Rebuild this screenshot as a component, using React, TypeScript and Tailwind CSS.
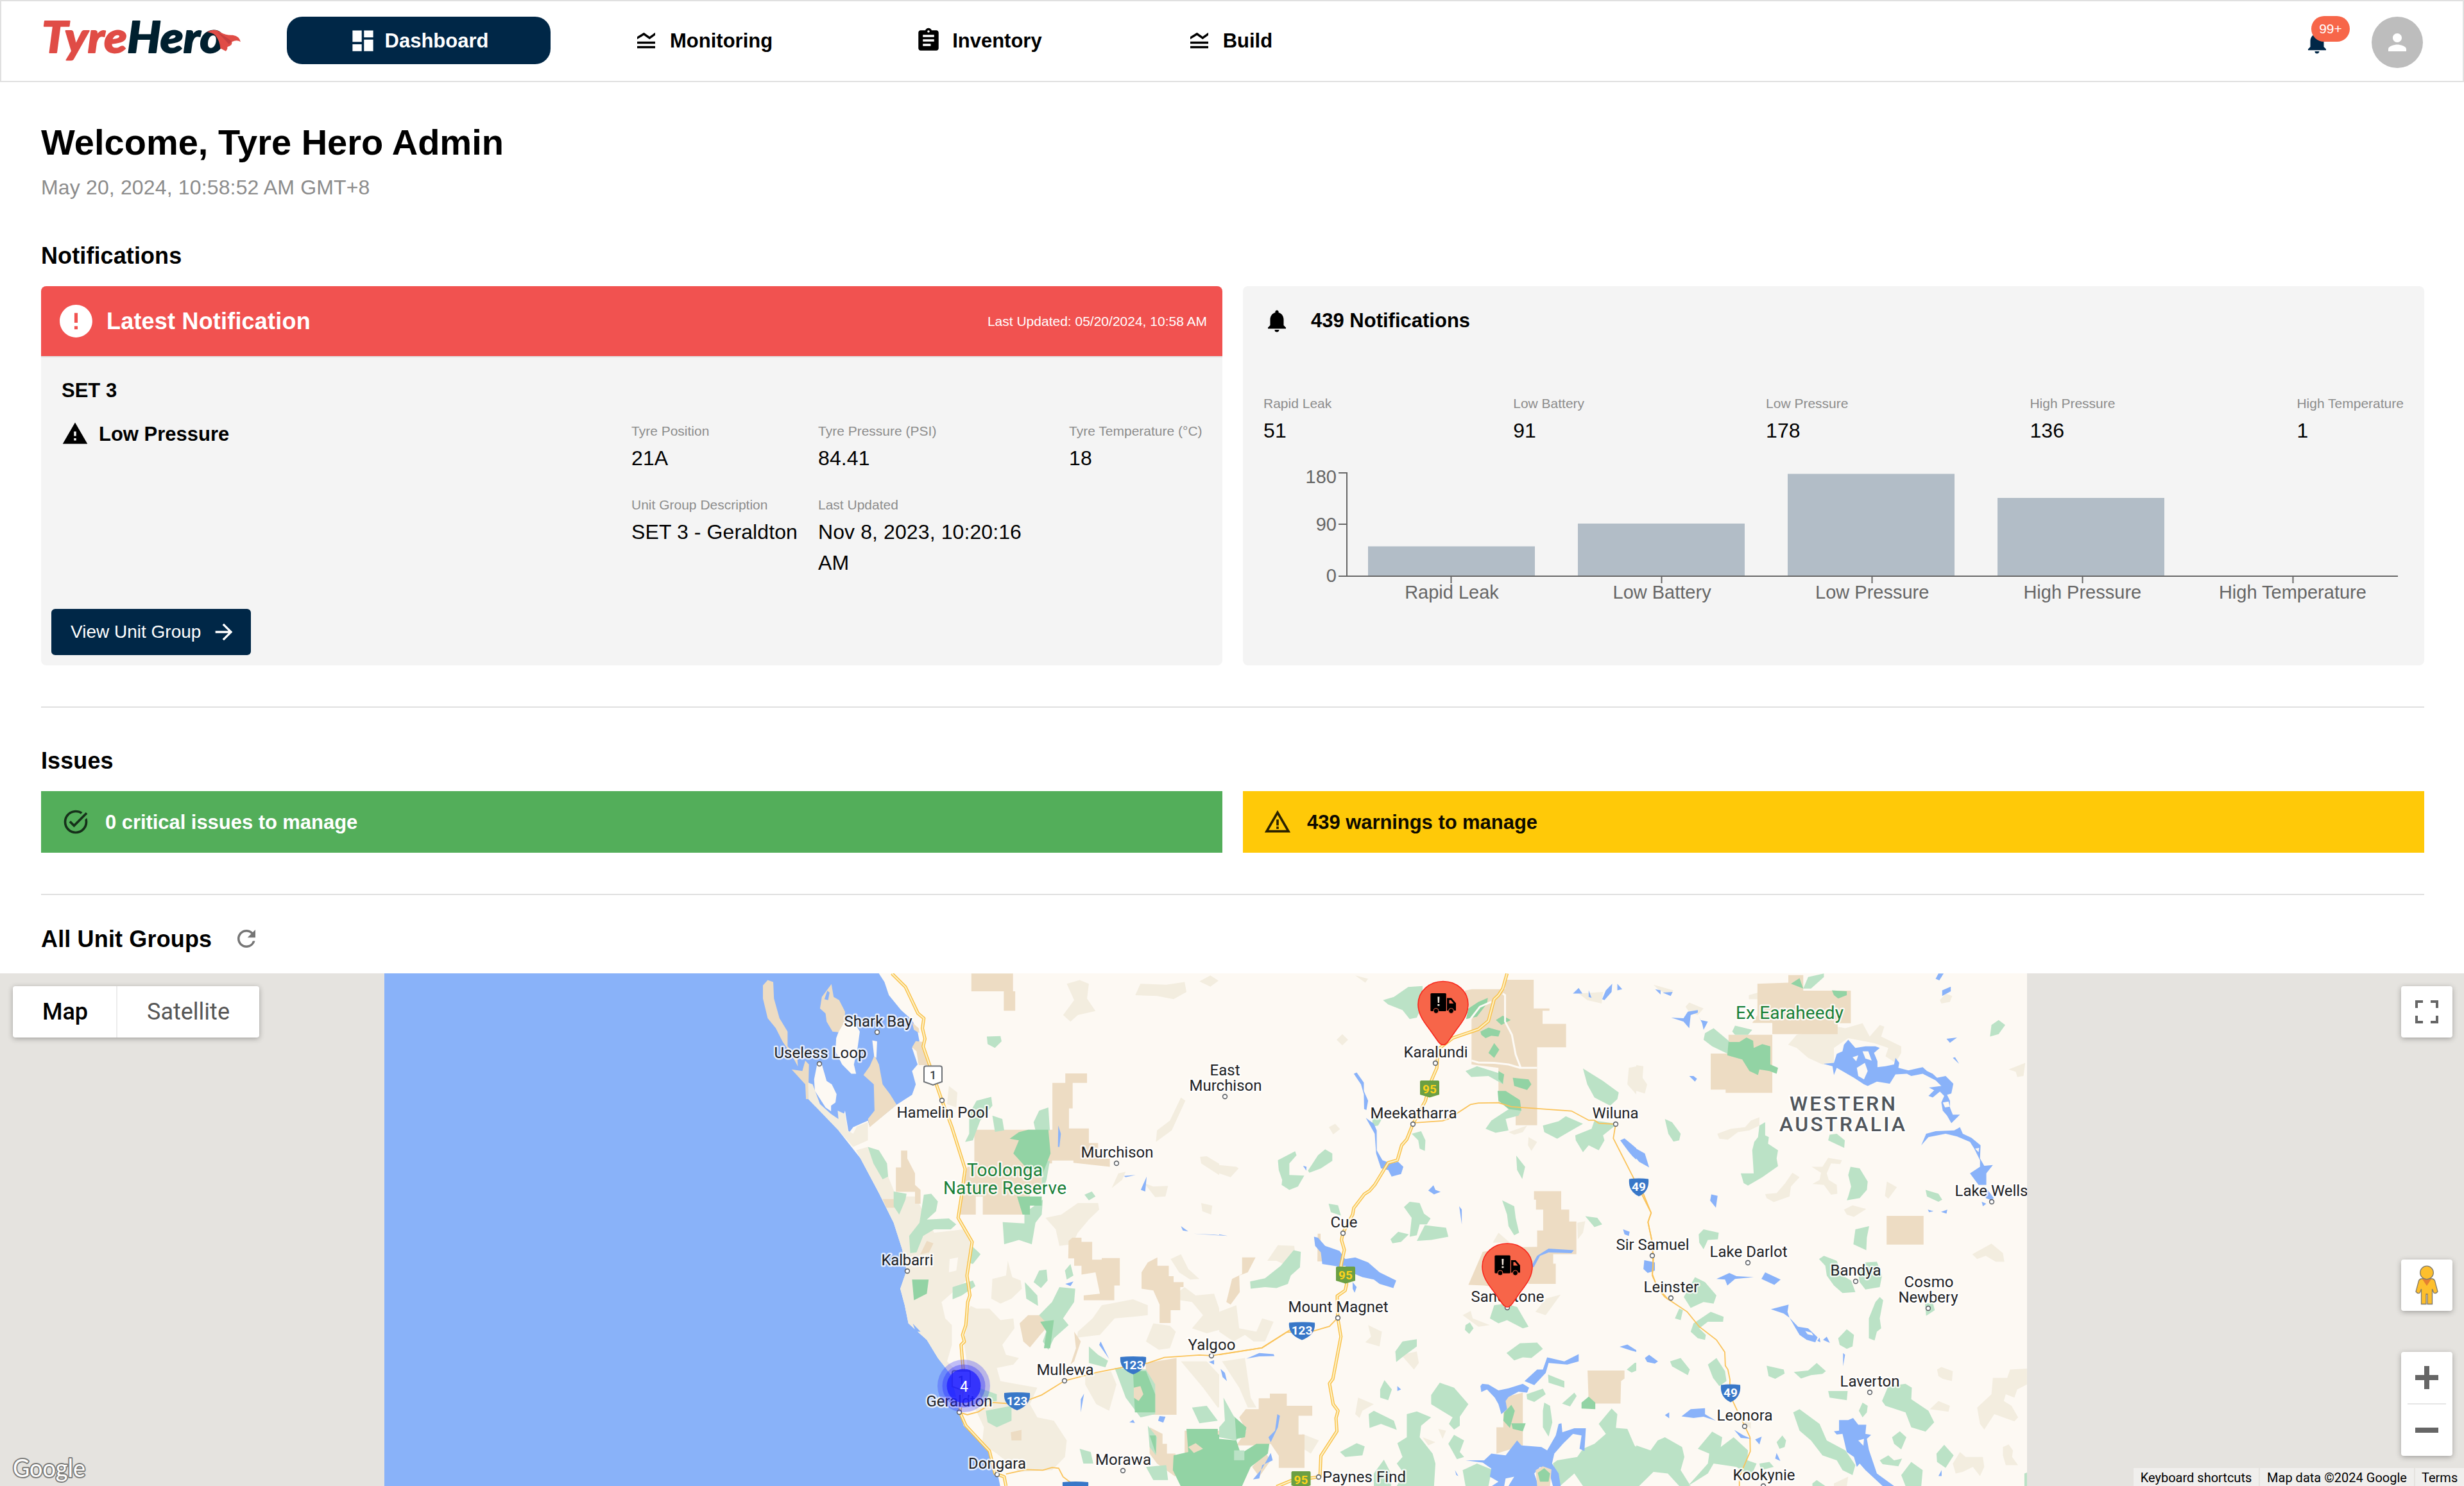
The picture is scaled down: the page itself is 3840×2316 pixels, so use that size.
import React from 'react';
import {
  MdArrowForward,
  MdAssignment,
  MdDashboard,
  MdError,
  MdLegendToggle,
  MdNotifications,
  MdPerson,
  MdRefresh,
  MdTaskAlt,
  MdWarning,
  MdWarningAmber,
} from 'react-icons/md';

function Logo() {
  return (
    <svg className="block h-[110px] w-[340px] overflow-visible" viewBox="56 10 340 110">
      <g fontFamily="Lato, sans-serif" fontWeight={900} fontStyle="italic" fontSize={67} strokeWidth={1.8} strokeLinejoin="round">
        <text x={65} y={81.5} fill="#e04c46" stroke="#e04c46" textLength={133} lengthAdjust="spacingAndGlyphs">
          Tyre
        </text>
        <text x={198} y={81.5} fill="#00202f" stroke="#00202f" textLength={152} lengthAdjust="spacingAndGlyphs">
          Hero
        </text>
      </g>
      <g transform="translate(56 20) scale(.3333)">
        <path
          d="M800 90Q835 70 865 92Q890 106 920 104Q952 108 957 136Q940 124 916 136Q922 150 895 160Q897 170 888 179L862 166Q860 130 838 104Q822 92 800 90Z"
          fill="#e04c46"
        />
        <path d="M845 88Q890 112 915 134L902 146Q878 120 845 88Z" fill="#c63f40" />
      </g>
    </svg>
  );
}

function Header() {
  return (
    <header className="flex h-[128px] items-start border-2 border-[#e0e0e0] bg-white text-[31px] font-bold text-black">
      <div className="ml-[54px] mt-[8px]">
        <Logo />
      </div>
      <nav className="ml-[51px] mt-[24px] flex h-[74px] items-center">
        <a className="flex h-[74px] w-[411px] items-center justify-center gap-[13px] rounded-[24px] bg-[#002747] text-white">
          <MdDashboard size={43} />
          <span className="pt-[2px]">Dashboard</span>
        </a>
        <a className="ml-[128px] flex items-center gap-[16px]">
          <MdLegendToggle size={42} />
          <span className="pt-[2px]">Monitoring</span>
        </a>
        <a className="ml-[222px] flex items-center gap-[16px]">
          <MdAssignment size={42} />
          <span className="pt-[2px]">Inventory</span>
        </a>
        <a className="ml-[224px] flex items-center gap-[16px]">
          <MdLegendToggle size={42} />
          <span className="pt-[2px]">Build</span>
        </a>
      </nav>
      <div className="ml-auto flex">
        <div className="relative mt-[43px] h-[42px] w-[42px] text-[#002747]">
          <MdNotifications size={42} />
          <span className="absolute left-[12px] top-[-20px] flex h-[40px] w-[60px] items-center justify-center rounded-full bg-[#f76649] text-[21px] font-normal text-white">
            99+
          </span>
        </div>
        <div className="ml-[64px] mr-[62px] mt-[24px] flex h-[80px] w-[80px] items-center justify-center rounded-full bg-[#bdbdbd] text-white">
          <MdPerson size={42} />
        </div>
      </div>
    </header>
  );
}

function Field({ label, value }: { label: string; value: string }) {
  return (
    <div>
      <div className="whitespace-nowrap text-[21px] leading-[32px] text-[#8c8c8c]">{label}</div>
      <div className="mt-[2px] max-w-[330px] text-[32px] leading-[48px] tracking-[0.1px] text-black">{value}</div>
    </div>
  );
}

function LatestNotification() {
  return (
    <section className="flex h-[591px] w-[1841px] flex-col overflow-hidden rounded-[8px] bg-[#f4f4f4]">
      <div className="flex h-[111px] items-center justify-between border-b-2 border-[#e0e0e0] bg-[#f15250] pl-[24px] pr-[24px] text-white">
        <div className="flex items-center gap-[17px] text-[36px] font-bold tracking-[0.2px]">
          <MdError size={61} />
          Latest Notification
        </div>
        <div className="text-[21px]">Last Updated: 05/20/2024, 10:58 AM</div>
      </div>
      <div className="flex flex-1">
        <div className="flex w-[920px] flex-col text-[31px] font-bold">
          <div className="ml-[32px] mt-[28px] leading-[48px]">SET 3</div>
          <div className="ml-[32px] mt-[19px] flex h-[48px] items-center gap-[16px]">
            <MdWarning size={42} />
            <span className="pt-[2px]">Low Pressure</span>
          </div>
          <button className="mb-[16px] ml-[16px] mt-auto flex h-[72px] w-[311px] items-center gap-[16px] rounded-[6px] bg-[#002747] pl-[30px] text-[28px] font-normal text-white">
            View Unit Group
            <MdArrowForward size={40} />
          </button>
        </div>
        <div className="grid flex-1 grid-cols-[291px_391px_1fr] content-start gap-y-[33px] pt-[99px]">
          <Field label="Tyre Position" value="21A" />
          <Field label="Tyre Pressure (PSI)" value="84.41" />
          <Field label="Tyre Temperature (°C)" value="18" />
          <Field label="Unit Group Description" value="SET 3 - Geraldton" />
          <Field label="Last Updated" value="Nov 8, 2023, 10:20:16 AM" />
        </div>
      </div>
    </section>
  );
}

const CATEGORIES = [
  { name: 'Rapid Leak', count: 51, x: 2132, top: 851.5 },
  { name: 'Low Battery', count: 91, x: 2459, top: 816 },
  { name: 'Low Pressure', count: 178, x: 2786, top: 738.5 },
  { name: 'High Pressure', count: 136, x: 3113, top: 776 },
  { name: 'High Temperature', count: 1, x: 3440, top: 897 },
];

function Chart() {
  return (
    <svg className="mt-[25px] block h-[240px] w-[1777px]" viewBox="1969 720 1777 240">
      {CATEGORIES.map((c) => (
        <rect key={c.name} x={c.x} y={c.top} width={260} height={897 - c.top} fill="#b2bdc7" />
      ))}
      <path
        d="M2086 737H2099V898M2086 817H2099M2086 898H3737"
        fill="none"
        stroke="#666"
        strokeWidth={2}
      />
      <g fill="#666" fontSize={29} textAnchor="middle">
        {CATEGORIES.map((c, i) => (
          <g key={c.name}>
            <rect x={2261.5 + i * 328 - 1} y={898} width={2} height={11} />
            <text x={2262.5 + i * 327.6} y={933}>
              {c.name}
            </text>
          </g>
        ))}
      </g>
      <g fill="#666" fontSize={29} textAnchor="end">
        <text x={2083} y={753}>180</text>
        <text x={2083} y={827}>90</text>
        <text x={2083} y={907}>0</text>
      </g>
    </svg>
  );
}

function NotificationSummary() {
  return (
    <section className="h-[591px] w-[1841px] rounded-[8px] bg-[#f4f4f4] px-[32px]">
      <div className="flex h-[108px] items-center gap-[32px] text-[31px] font-bold">
        <MdNotifications size={42} />
        439 Notifications
      </div>
      <div className="mt-[59px] flex justify-between">
        {CATEGORIES.map((c) => (
          <Field key={c.name} label={c.name} value={String(c.count)} />
        ))}
      </div>
      <Chart />
    </section>
  );
}

const WATER = '#89b2f9';
const LAND = '#fdf9f3';
const TAN = '#eddcc3';
const SAND = '#f3eddf';
const GREEN = '#bbe2c6';
const DEEP = '#92d3a4';

type Layer = [string, string];

const WEST: Layer[] = [
  [WATER, 'M-900 0H462L470 14L485 40L497 80L530 125L560 155L575 190L580 220L560 240L575 290L560 310L570 350L560 382L535 400L518 412L445 478L440 460L400 480L388 498L378 430L372 450L380 490L360 490L420 575L470 680L510 770L533 850L545 915L528 970L540 1020L550 1075L600 1125L630 1180L665 1230L690 1345L700 1385L770 1465L795 1545L805 1600H-900Z'],
  [TAN, 'M168 34L183 40L185 90L200 150L222 190L222 235L248 265L250 296L235 265L208 220L190 180L168 150L155 90L155 50Z'],
  [TAN, 'M341 46L347 85L362 95L378 130L377 175L360 192L344 190L328 160L325 135L310 120L315 85Z'],
  [WATER, 'M330 66L336 72L332 95L322 92Z'],
  [LAND, 'M360 192L377 160L405 165L418 190L412 240L402 290L408 318L395 318L370 290L352 250L354 210Z'],
  [TAN, 'M458 262L470 290L480 350L500 380L518 412L445 480L440 455L458 430L456 350L428 322L445 295Z'],
  [LAND, 'M452 217L465 220L463 270L457 265Z'],
  [TAN, 'M270 278L280 290L278 395L272 395L270 350L233 305L262 310Z'],
  [LAND, 'M302 290L315 290L328 340L342 350L355 380L352 405L340 415L340 432L325 420L296 370L294 335Z'],
  [SAND, 'M278 345L290 350L310 410L340 440L360 455L358 430L378 440L385 490L400 500L410 478L440 465L440 520L400 540L360 490L278 395Z'],
  [TAN, 'M560 163L578 180L580 195L565 185ZM570 219L590 222L605 292L578 292L572 250L560 238Z'],
  [SAND, 'M408 550L440 540L495 630L517 690L570 690L600 760L620 800L700 790L720 830L712 940L640 1010L650 1060L668 1080L668 1140L655 1190L690 1230L690 1340L665 1230L630 1180L600 1125L550 1075L540 1020L528 970L545 915L533 850L510 770L470 680Z'],
  [SAND, 'M715 1020L735 1030L770 1030L800 1065L835 1060L838 1090L805 1140L815 1170L850 1180L835 1200L790 1210L800 1250L850 1260L900 1270L880 1320L900 1360L945 1370L980 1430L975 1480L940 1520L850 1525L790 1470L750 1440L755 1390L730 1330L710 1200L700 1130L710 1080Z'],
  [SAND, 'M820 885L832 935L855 945L858 970L830 1000L800 1015L775 1000L778 940L815 930ZM922 755L965 745L1010 710L1065 710L1068 730L1040 760L1010 800L995 835L960 840L950 790ZM980 45L1015 34L1040 45L1035 90L1058 128L1010 140L990 160L970 140L1000 95ZM1166 80L1180 45L1250 48L1300 40L1305 70L1270 92L1225 82ZM1340 38L1370 20L1392 36L1370 54ZM1290 390L1302 400L1265 490L1222 525L1225 490L1260 460ZM1342 570L1360 568L1400 595L1448 600L1430 630L1400 630L1345 590ZM1190 650L1215 660L1255 658L1248 690L1220 692ZM1120 620L1140 615L1130 640L1102 665ZM1345 710L1375 718L1372 745L1348 735ZM1262 880L1290 865L1310 910L1340 940L1315 942L1285 920ZM660 355L683 375L680 420L655 410Z'],
  [SAND, 'M1010 1100L1050 1060L1075 1020L1160 1002L1200 1020L1200 1050L1160 1055L1110 1060L1070 1110L1008 1118ZM1215 1075L1260 1082L1276 1100L1260 1150L1230 1155L1195 1130ZM1260 1000L1300 965L1330 990L1380 985L1400 1050L1450 1060L1490 1090L1500 1040L1530 1050L1525 1090L1480 1130L1440 1130L1410 1090L1360 1105L1320 1090L1350 1050L1320 1010ZM1290 1190L1360 1190L1410 1250L1430 1320L1390 1330L1350 1270ZM1030 1230L1100 1220L1115 1260L1095 1340L1060 1320L1030 1260Z'],
  [TAN, 'M721 14H834V68H840V127H809V68H721ZM976 317H1035V346H996V423H986V484H1040V528H1065V576H1097V600L998 588V581H934V488H941V346H976ZM729 488H940V590H912V680H880V745H752V690H733V745H690L694 690L710 600H729ZM530 551H547V575L568 620L568 655L583 670V712H568V676H516V602H530ZM480 698H516V724H490ZM600 825L618 832L606 860L582 866Z'],
  [TAN, 'M985 825L995 815H1020V828H1049V882H1075V877H1124V960H1109V1005H1026V990L1070 985L1058 920L1020 927V900H1000V878H984ZM1183 920L1200 890L1226 875V900H1257V932H1270V950H1297V965H1288V1035H1262V1074H1232V1018L1215 975L1183 970ZM1456 875H1493L1478 910L1450 935L1445 990L1425 1015H1413L1420 970L1445 930ZM875 1050H925L940 1070L908 1110L880 1148L862 1130L852 1075ZM1000 1100L1018 1130L1000 1190L990 1200L1005 1150ZM1195 1195L1278 1180V1352H1190ZM828 1405L857 1398V1430L830 1430ZM1205 1390L1240 1410V1440H1252V1470H1275V1540L1225 1500L1205 1470ZM1440 1350H1475L1505 1328V1300H1531V1288H1600V1510H1568L1520 1440L1440 1450Z'],
  [TAN, 'M1300 1400H1400V1490H1300Z'],
  [GREEN, 'M763 205L800 204L803 220L785 240L765 228ZM735 400L775 388L778 415L745 460L725 520L704 525L715 500L715 440ZM778 445L805 455L810 490L785 494ZM890 465L905 430L930 420L934 490L895 490ZM440 540L470 550L492 590L495 630L480 638L455 590ZM510 675L545 682L542 700L525 745L510 720ZM592 685L612 682L630 705L625 735L600 760L660 757L680 775L665 790L620 790L590 810L572 860L555 862L552 810L580 770ZM720 838L746 865L725 895L710 890ZM806 768L865 772L865 740L915 700L912 745L895 770L885 835L850 822L810 835ZM912 582H934L925 640L912 680ZM1028 685L1048 675L1058 690L1040 702ZM905 915L925 912L928 945L910 968L890 950ZM990 895L998 930L980 942L975 915ZM866 950L900 990L902 1022L870 1000ZM670 965L725 945L732 962L695 990L670 1002ZM960 965L1003 970L1000 1010L970 1060L985 1080L945 1120L930 1155L915 1130L930 1080L905 1050L940 1010ZM1040 1145L1065 1170L1092 1188L1085 1208L1040 1195ZM1110 1210L1195 1215L1220 1260V1350L1180 1360L1140 1300ZM760 1340L830 1325L830 1370L790 1390L765 1375ZM1015 1455L1045 1465L1052 1500L1025 1500ZM1200 1385L1225 1420L1222 1475L1205 1450ZM1195 1510L1250 1505L1255 1550L1215 1550ZM740 1270L790 1290L790 1310L750 1315ZM1320 1330L1360 1325L1390 1370L1340 1378ZM1410 1300L1440 1340L1465 1390L1440 1420L1405 1400ZM1480 945L1530 945L1568 925V955L1510 972L1480 968ZM1555 580L1568 576V630L1555 615Z'],
  [DEEP, 'M825 515L850 495L875 488H930L936 560L915 620L880 615L835 560L850 520ZM845 690H912V718H880V745H860ZM560 942L605 942L600 985L565 1005ZM908 1070L945 1065L935 1150H918L925 1100ZM1160 1220H1195L1220 1290V1345H1165ZM1305 1395H1390V1412H1420V1390H1422V1360L1445 1360L1468 1400L1470 1425L1440 1450L1460 1460L1530 1445V1475L1495 1490L1495 1510H1455V1570H1290L1268 1520L1270 1475L1310 1465ZM1205 1415H1222V1470Z'],
  [GREEN, 'M1435 1460H1462V1492H1435ZM1395 1520H1423V1535H1395ZM1500 1510L1530 1520L1500 1560H1450V1515Z'],
  [TAN, 'M1162 1270L1180 1265L1188 1290L1175 1310L1162 1300ZM1310 1450L1330 1438L1350 1455L1325 1468Z'],
  [LAND, 'M662 880L685 875L680 915L660 920ZM640 1010L690 1005L720 1020L700 1060L670 1050Z'],
  [WATER, 'M562 1076L583 1100L570 1100ZM957 475L964 500L960 540L956 540ZM1135 628L1167 625L1140 632ZM1197 630L1193 675L1181 670ZM1290 780L1310 796L1295 793ZM1323 803L1420 810L1380 806ZM976 955L998 948L990 962ZM1072 1130L1095 1183L1068 1140ZM1027 1288L1018 1345V1305ZM1468 1185L1500 1165L1545 1170L1500 1180ZM1398 1212L1414 1250L1402 1240ZM1232 1356L1248 1358L1242 1376L1228 1370ZM1150 1375L1160 1367L1165 1377ZM1530 1470L1538 1490L1497 1548L1510 1510ZM1553 1350L1558 1400L1540 1440L1532 1420ZM1366 1192L1380 1186V1200Z'],
];

const CENTRE: Layer[] = [
  [SAND, 'M0 595L60 600L68 605L40 632L0 620ZM410 215L430 198L450 215L430 232ZM383 480L405 470L422 486L398 502ZM1430 300L1480 292L1478 330L1495 345L1455 380L1425 350ZM1080 510L1110 525L1090 552L1078 535ZM1010 495L1075 475L1060 495L1030 503ZM168 885L205 838L262 840L265 860L225 895L200 885ZM520 1080L568 1100L560 1145L510 1132L530 1115ZM850 1050L878 1037L885 1060L945 1080L905 1085ZM1104 1040L1140 1000L1192 988L1140 1050ZM1250 770L1278 765L1270 800L1252 820ZM635 1170L690 1160L697 1195L680 1215ZM485 1300L540 1320L500 1340L490 1362L475 1350ZM710 1420L755 1435L730 1445ZM765 1395L792 1400L780 1425ZM475 20L520 30L510 42ZM290 1410L348 1430L320 1470L285 1450ZM955 830L975 800L1015 830ZM0 1040L60 1020L70 1090L130 1100L150 1060L190 1070L160 1130L120 1130L90 1110L50 1130L0 1100ZM10 1190L90 1180L110 1300L130 1330L100 1330L70 1270ZM1517 50L1570 65V90L1530 70ZM1255 75L1340 70L1335 105L1285 95Z'],
  [TAN, 'M858 66L882 62H998V33H1098V120H1153V127H1129V167H1211V238H1110V474H1035V405H975V300L881 290V130L860 100ZM1099 674H1194V730H1222V766H1247V865H1166V894H1175V955H1085L1040 950L1000 970L925 960L870 958L920 858L1000 845L1110 843V793H1131V730H1106V700H1099ZM344 803H354V830L360 887H343ZM80 875H127L100 920L70 930L72 980L40 1018L25 1010L45 940L80 925ZM1286 1218H1415V1242L1403 1250L1401 1318H1290ZM1000 1298L1060 1285V1445L968 1470V1390H992V1340ZM138 1302H177V1288H236V1325H325V1355H277V1412H298V1513H208V1476L180 1440L150 1445H60L95 1400L70 1360L93 1335H138ZM115 1510L160 1465L180 1490L140 1540Z'],
  [GREEN, 'M572 95L610 85L660 55L710 52V110L690 148L665 152L640 125L590 108ZM860 310L900 295L990 320L992 350L940 325L880 328ZM1270 302L1340 340L1395 375L1390 395L1365 415L1310 390L1285 350ZM1130 475L1185 462L1210 447L1270 470L1225 492L1180 515L1135 495ZM1243 505L1300 485L1310 460L1390 470L1340 505L1345 520L1325 550L1290 535L1270 556L1245 520ZM930 485L950 460L1020 420L1055 430L1045 445L1000 455L1010 490L965 497ZM672 500L705 492L720 520L718 552L700 545L695 520ZM205 580L265 553L270 565L245 590L245 625L297 627L275 660L245 670L218 655L220 640L208 610ZM310 612L345 565L370 547L395 560L395 582L355 605L315 618ZM1037 566L1068 600L1058 637L1040 610ZM382 712L415 717L425 748L390 738ZM645 722L665 706L700 710L715 742L738 757L725 775L700 775L690 808L665 812L672 755ZM598 820L625 797L662 805L635 828L605 832ZM690 825L718 777L792 785L800 812L765 818L740 822ZM988 702L1030 720L1035 755L1047 800L1030 808L1010 780L1005 745ZM1278 750L1320 755L1337 775L1310 783ZM108 948L160 938L215 900L260 853L285 858L282 905L250 930L240 955L200 968L160 965L110 970ZM535 450L570 452L555 475L535 478ZM945 1060L960 1020L1000 1015L1040 1025L1080 1085L1060 1090L1005 1065L975 1075ZM860 1080L875 1072L888 1090L873 1107L858 1095ZM615 1160L640 1130L690 1123L690 1145L650 1170L618 1192ZM1003 1165L1050 1135L1110 1133L1130 1152L1090 1180L1060 1178L1030 1187ZM1423 1215L1450 1195L1488 1190L1480 1210L1440 1224ZM1148 1230L1205 1250L1205 1270L1150 1255ZM1073 1290L1130 1273L1140 1290L1100 1313L1075 1305ZM1197 1318L1240 1285L1248 1295L1225 1327ZM1135 1315L1155 1325L1163 1375L1150 1418L1130 1390L1130 1340ZM740 1292L770 1255L820 1270L840 1290L870 1320L840 1358L840 1385L820 1397L802 1380L815 1360L740 1320ZM522 1350L540 1340L610 1370L620 1398L565 1380L525 1392ZM562 1275L577 1247L603 1275L590 1308L562 1300ZM422 1465L480 1438L508 1448L500 1475L440 1480ZM620 1500L640 1480L622 1438L655 1420L655 1350L690 1342L740 1360L705 1385L700 1420L745 1470L755 1500L750 1568H620L645 1530ZM540 1530L575 1488L600 1530L600 1568H540ZM800 1440L820 1413L855 1430L840 1465L855 1480L830 1487ZM850 1520L900 1500L952 1518L940 1568H860ZM15 1300L50 1355L90 1390L60 1430L0 1420V1390L20 1370Z'],
  [GREEN, 'M1325 1380L1370 1333L1390 1350L1385 1392L1425 1395L1450 1445L1500 1480L1545 1420H1568V1520L1520 1510L1490 1568H1270L1240 1530L1190 1568L1165 1500L1180 1490L1250 1480L1270 1455L1310 1440L1350 1410Z'],
  [DEEP, 'M870 120L905 100L938 88L935 105L900 145L862 152ZM966 155L990 142L1018 155L985 170ZM912 190L940 178L982 188L975 205L950 203L930 210L915 200ZM960 225L978 245L960 270L940 255ZM1025 330L1080 335L1090 350L1075 367L1030 355ZM972 370L1000 370L1050 398L1055 430L1010 425L975 400ZM975 310L995 320L990 348L975 335ZM1265 1315L1290 1297L1313 1315V1335L1265 1333ZM995 1345L1020 1322L1032 1340L1015 1392L992 1370ZM1020 1378L1070 1378L1060 1402L1025 1395ZM0 1425L60 1430L75 1470L130 1440L175 1440L170 1470L110 1510L80 1568H0ZM55 1360L95 1390L90 1420L60 1425Z'],
  [GREEN, 'M52 1460H88V1490H52Z'],
  [WATER, 'M470 318L480 314L505 345L505 370L520 400L514 428L506 425L505 380L495 350ZM512 452L540 470L550 490L550 550L570 580L600 590L625 585L643 600L635 622L602 630L590 610L565 605L548 560L543 500ZM331 812L345 815L370 840L420 855L440 880L475 875L520 890L560 920L618 945L608 968L560 955L540 942L500 935L460 920L440 900L420 903L360 895L355 860L335 840ZM466 950L480 965L473 982L466 970ZM730 672L748 656L755 670L773 676L750 684ZM838 720L847 730V775ZM293 597L305 600L304 612ZM1400 520L1415 514L1465 550L1465 545L1490 570L1501 603L1465 585L1445 570L1430 555ZM1410 790L1433 797L1430 810L1415 805ZM1482 885L1520 885L1520 915L1500 920L1485 915ZM1090 900L1110 870L1150 848L1238 853L1230 862L1150 860L1120 870L1098 905ZM1235 75L1255 58L1268 75ZM1290 65L1300 88L1290 85ZM1337 92L1350 65L1372 45L1370 70L1345 95ZM1390 45L1407 62L1390 65ZM1522 65L1568 75V80L1540 82ZM95 1182L140 1165L190 1168L193 1174L140 1175ZM5 1213L20 1225L27 1250L12 1238ZM1398 1146L1425 1139L1472 1165L1430 1155ZM1487 1180L1500 1170L1532 1190L1525 1197L1495 1190ZM912 1265L918 1258L940 1260L975 1278L1010 1272L1060 1258L1082 1270L1075 1285L1045 1282L1010 1298L1000 1310L1005 1335L985 1350L975 1320L962 1300L935 1275L915 1283ZM1066 1250L1110 1215L1130 1215L1145 1178L1205 1190L1255 1168L1255 1190L1215 1200L1150 1195L1140 1225L1100 1262ZM860 1490L925 1490L950 1470L1000 1475L1040 1430L1055 1445L1125 1450L1145 1460L1175 1415L1185 1380L1195 1378L1198 1405L1240 1393H1280L1275 1462L1258 1455L1265 1415L1235 1410L1200 1440L1170 1470L1162 1500L1185 1530L1192 1568H1165L1150 1520L1120 1510L1100 1530L1115 1568H1010L1030 1540L1000 1545L995 1568H952L975 1555L945 1540L950 1515L920 1497ZM622 1265L635 1275L622 1280ZM203 1350L212 1355L205 1390L180 1435L172 1420L195 1400ZM180 1468L187 1490L150 1505L140 1545L118 1548L150 1515ZM823 1520L835 1538L828 1535ZM0 805L30 810L0 808Z'],
  [TAN, 'M1105 1520L1130 1508L1160 1518L1155 1568H1110Z'],
  [DEEP, 'M1112 1528L1135 1514L1155 1530L1150 1555L1120 1555Z'],
];

const EAST: Layer[] = [
  [SAND, 'M60 48L130 65L120 80L80 65ZM172 115L185 102L235 120L215 140L185 132ZM393 80L425 72V92H393ZM1060 95L1080 75L1103 82L1095 100L1065 105ZM1300 305L1358 285L1352 325L1330 328L1325 312ZM530 230L560 200L700 175L730 180L790 165L815 205L850 170L866 175L855 205L925 235L925 255L905 285L870 265L880 240L830 225L740 210L690 240L690 285L650 290L600 270L560 240ZM283 500L330 485L380 480L400 460L430 450L430 475L395 490L355 495L320 518L290 515ZM450 683L490 680L520 650L545 618L570 632L540 660L535 690L480 707L455 695ZM612 600L650 600L670 573L718 580L712 592L680 590L665 620L672 640L700 655L702 682L680 685L655 655L615 652L640 640L645 618ZM725 730L755 717L803 728L760 752L735 745ZM875 645L910 662L880 697L868 688ZM1173 865L1240 833L1280 862L1285 888L1255 888L1220 870L1190 880ZM1050 1215L1065 1207L1105 1220L1102 1250L1070 1243L1055 1235ZM1025 1335L1055 1310L1095 1325L1090 1343ZM1190 1330L1240 1290L1245 1240L1295 1240L1305 1215L1364 1212V1260L1330 1275L1320 1300L1290 1290L1283 1310L1310 1325L1333 1360L1320 1372L1250 1350L1215 1397L1200 1380ZM1105 1500L1130 1465L1150 1480L1210 1480L1215 1510L1200 1538L1175 1510L1140 1525L1115 1530ZM1280 1450L1300 1442L1315 1460L1312 1480L1333 1505L1290 1505L1280 1475ZM0 292L25 295L22 330L38 350L30 378L0 370ZM375 1375L400 1375L400 1395ZM690 1560L740 1540L735 1568H690Z'],
  [TAN, 'M423 45L531 42V19H583V66H749V165H703V198H475V376H312V366H260V257H322V200H475V164H405L423 140ZM874 749H1003V836H874Z'],
  [GREEN, 'M583 60L600 25L655 14L655 25L610 60ZM235 215L240 195L270 180L325 220L320 258L265 235ZM335 190L345 172L405 185L390 200L345 200ZM1235 205L1240 170L1265 155L1288 170L1265 198ZM100 455L125 465L155 500L150 520L130 524L112 500ZM430 475L450 465L450 505L463 510L460 530L495 550L490 575L495 598L440 632L390 657L375 650L365 620L410 620L405 550L412 525L425 510ZM670 520L675 503L700 500L728 520L726 543ZM748 600L780 605L808 645L805 670L780 695L735 702L740 690L750 660L740 625ZM1010 670L1055 682L1068 700L1055 706L1015 690ZM218 805L235 790L288 800L285 820L250 822L235 850L220 830ZM765 790L813 780L805 815L803 853L758 835ZM638 880L655 870L700 885L720 930L750 945L765 980L720 983L690 960L665 930L660 900ZM775 925L800 890L840 888L858 930L850 965L800 972L780 950ZM1008 1015L1035 1010L1042 1035L1012 1052ZM166 995L205 935L240 950L280 990L270 1015L235 1010L190 1028ZM135 1060L150 1030L163 1035L155 1065ZM190 1100L200 1075L260 1040L305 1055L303 1070L250 1070L220 1090L243 1110L240 1125L215 1120ZM812 1120L812 1060L835 1010L850 995L862 1005L850 1060L855 1090L840 1100L832 1127ZM705 1120L735 1093L760 1110L755 1145L735 1152L710 1140ZM118 1190L155 1180L187 1215L180 1232L125 1205ZM250 1200L280 1180L310 1220L315 1250L290 1265L268 1240ZM455 1203L515 1215L518 1227L485 1243L462 1235ZM550 1222L600 1218L630 1195L662 1220L650 1228L610 1232L575 1242ZM670 1280L738 1280L735 1308L675 1300ZM777 1340L790 1315L808 1325L805 1345L790 1360ZM858 1310L880 1265L940 1258L962 1270L960 1305L1020 1340L1040 1375L1010 1403L960 1390L940 1345L870 1325ZM548 1345L570 1335L640 1380L665 1430L730 1460L765 1505L755 1535L720 1520L700 1490L650 1475L610 1430L570 1400ZM893 1420L920 1402L943 1420L925 1457L900 1440ZM1048 1470L1075 1443L1108 1475L1080 1513L1050 1495ZM850 1490L880 1475L900 1490L928 1485L915 1508L860 1502ZM925 1535L960 1495L1000 1520L995 1568H940ZM490 1435L510 1415L523 1430L518 1450L500 1455ZM615 1560L630 1550L660 1568H615ZM1355 1530L1364 1527V1568H1355ZM0 1445L50 1460L75 1430L100 1420L160 1450L168 1480L155 1520L190 1568H150L110 1530L60 1525L10 1568H0ZM215 1455L265 1403L300 1420L295 1450L340 1420L390 1460L388 1490L420 1500L400 1540L350 1510L270 1500L250 1530L180 1568L250 1500L255 1470ZM430 1500L465 1495L480 1510L435 1520Z'],
  [DEEP, 'M540 45L570 28L583 60ZM683 65L735 68L735 80L705 90L690 80ZM322 222L360 222L385 208L408 218L410 240L440 228L468 235V290L495 300L490 318L465 310L430 305L425 322L395 310L370 275L318 262Z'],
  [WATER, 'M66 62L85 65V78ZM92 72L127 70L120 82ZM122 148L165 150L180 130L215 125L215 133L190 140L185 180L165 160ZM217 142L225 155L250 160L235 185L230 165ZM185 325L200 325L212 333L205 342ZM1045 30L1055 14H1073L1058 35ZM1068 65L1098 54V68L1068 82ZM1083 212L1120 208L1095 224ZM1105 270L1113 268L1127 288ZM653 288L690 285L700 258L720 250L725 230L740 215L765 240L800 235L835 235L850 240L830 255L842 280V298L870 295L900 290L905 270L918 285L915 300L950 308L1000 298L1015 310L1035 318L1050 330L1080 325L1107 348L1100 378L1085 382L1095 400V420L1105 442L1130 442L1100 468L1085 445L1070 430L1065 405L1075 385L1060 372L1035 390L1020 385L1040 368L1022 360L1065 355L1045 338L1000 318L960 325L945 318L905 320L885 348L840 342L808 355L795 350L760 330L700 300L690 322L685 295ZM995 535L1012 500L1045 492L1110 490L1130 480L1140 500L1170 512L1202 535L1200 575L1215 597L1245 595L1222 620V655L1195 655L1165 620L1200 600V580L1180 545L1165 525L1120 508L1080 500L1020 510ZM1225 668L1248 695L1240 702L1220 695ZM1206 706L1222 712L1210 720ZM1018 730L1038 735L1022 738ZM1064 737L1086 730L1083 742ZM258 703L262 684L284 688L278 724ZM0 545L30 560L45 602L10 585L0 575ZM28 883L65 890V915L40 922L25 910ZM280 940L325 922L350 932L410 935L345 940L318 960L310 942ZM437 940L450 920L504 942L482 958ZM470 1032L532 1018L528 1040L535 1058L515 1045ZM535 1058L565 1085L600 1090L633 1117L625 1132L595 1125L570 1110ZM632 1128L640 1118L643 1132ZM652 1125L665 1115L676 1134ZM722 1165L729 1170L722 1205ZM30 1180L45 1170L76 1190L65 1197L38 1192ZM100 1353L115 1345V1363ZM158 1357L190 1335L240 1332L240 1350L278 1370L235 1358L200 1362ZM342 1398L375 1415L402 1425L365 1422ZM415 1427L438 1418L430 1442ZM485 1485L490 1468L503 1492ZM690 1402L708 1400V1368H740L757 1362L775 1382H803L800 1410L820 1413L805 1425L812 1458L840 1530L900 1568H860L800 1520L780 1500L770 1510L760 1480L735 1465L720 1410L700 1412ZM1055 1538L1066 1520V1538Z'],
  [LAND, 'M755 268L775 262L768 280ZM770 300L798 285L808 310L795 335L775 325ZM790 250L810 250L822 278L800 272ZM1183 545L1197 543L1195 556ZM590 1098L612 1103L618 1112L598 1108ZM775 1430L795 1425L793 1446ZM1070 405L1090 402L1095 418L1078 420Z'],
];

const HIGHWAYS = {
  west: 'M505 14L542 55L576 135L592 150L588 180L595 212L590 235L617 322L641 399L668 480L704 607L694 690L685 755L723 828L709 930L717 990L711 1010L706 1080L697 1110L702 1130L693 1140L700 1230L690 1345L706 1385L770 1462L785 1530L810 1540L815 1568',
  centre:
    'M1005 14L990 60L975 80L960 92L940 158L905 183L815 210L770 240L762 270L760 300L735 350L720 400L676 471L655 517L637 535L622 580L590 588L543 655L525 673L507 683L470 725L466 745L432 801L427 822L437 852L425 900L445 955L440 975L412 992L414 1058L425 1115L397 1243L385 1257L398 1320L415 1340L408 1362L411 1402L355 1477L352 1540L250 1552L200 1570',
};
const MINOR_ROADS = {
  west: 'M690 1345L710 1352L740 1343L780 1315L845 1320L912 1292L974 1249L1060 1224L1160 1202L1200 1195L1245 1178L1340 1171L1373 1173L1510 1149L1600 1085M815 1532L870 1518L915 1520L940 1512L958 1514L970 1540L1003 1568',
  centre:
    'M676 467L780 461L800 455L878 411L905 407L975 406L1020 418L1230 431L1290 459L1310 459L1325 468L1384 471L1376 514L1450 640L1508 740L1497 768L1512 830L1515 900L1512 930L1530 965L1568 1003M0 1170L150 1149L235 1102L330 1098L385 1084L414 1058',
  east: 'M20 672L52 740L41 768L56 830L60 880L56 925L75 970L100 995L178 1040L220 1085L280 1125L309 1162L311 1203L320 1215L327 1245L326 1290L350 1335L379 1387L397 1420L398 1463L360 1540V1568',
};
const TRACKS = 'M881 278L905 284L960 285L1010 290L1050 300H1110M990 75L998 80V160L1022 200L1035 260L1052 298M870 160L910 115L950 100';

type Place = { t: string; x: number; y: number; w: number; dot?: [number, number] };

const PLACES: Place[] = [
  { t: 'Shark Bay', x: 1315, y: 1600, w: 106, dot: [1367, 1608.7] },
  { t: 'Useless Loop', x: 1206, y: 1649, w: 144, dot: [1277, 1658] },
  { t: 'Hamelin Pool', x: 1397, y: 1742, w: 143, dot: [1468, 1715] },
  { t: 'East', x: 1885, y: 1676, w: 47 },
  { t: 'Murchison', x: 1853, y: 1700, w: 113, dot: [1909, 1709] },
  { t: 'Murchison', x: 1684, y: 1804, w: 113, dot: [1740, 1813] },
  { t: 'Kalbarri', x: 1373, y: 1972, w: 81, dot: [1414, 1981] },
  { t: 'Yalgoo', x: 1851, y: 2104, w: 74, dot: [1888, 2113] },
  { t: 'Mullewa', x: 1615, y: 2143, w: 89, dot: [1659, 2152] },
  { t: 'Geraldton', x: 1443, y: 2192, w: 103, dot: [1495, 2201] },
  { t: 'Dongara', x: 1508.5, y: 2289, w: 90, dot: [1554, 2298] },
  { t: 'Morawa', x: 1706.5, y: 2283, w: 87, dot: [1750, 2292] },
  { t: 'Karalundi', x: 2187, y: 1648, w: 100, dot: [2237, 1657] },
  { t: 'Meekatharra', x: 2135, y: 1743, w: 135, dot: [2202, 1752] },
  { t: 'Wiluna', x: 2481, y: 1743, w: 72, dot: [2518, 1752] },
  { t: 'Cue', x: 2073, y: 1913, w: 42, dot: [2093, 1922] },
  { t: 'Mount Magnet', x: 2007, y: 2045, w: 156, dot: [2085, 2054] },
  { t: 'Sandstone', x: 2292, y: 2029, w: 114, dot: [2349, 2038] },
  { t: 'Sir Samuel', x: 2518, y: 1947.5, w: 114, dot: [2575, 1957] },
  { t: 'Leinster', x: 2561, y: 2014, w: 86, dot: [2604, 2023] },
  { t: 'Paynes Find', x: 2060.5, y: 2310, w: 130, dot: [2055, 2302] },
  { t: 'Lake Wells', x: 3046, y: 1864, w: 114, dot: [3104, 1873] },
  { t: 'Lake Darlot', x: 2664, y: 1959, w: 121, dot: [2724, 1968] },
  { t: 'Bandya', x: 2852, y: 1988, w: 79, dot: [2892, 1997] },
  { t: 'Cosmo', x: 2967, y: 2005.5, w: 77 },
  { t: 'Newbery', x: 2958, y: 2030, w: 93, dot: [3005, 2039] },
  { t: 'Laverton', x: 2867, y: 2161, w: 93, dot: [2914, 2170] },
  { t: 'Leonora', x: 2675, y: 2214, w: 87, dot: [2719, 2223] },
  { t: 'Kookynie', x: 2700, y: 2307, w: 97, dot: [2748, 2316] },
];

const SHIELDS: { n: string; x: number; y: number; kind: 'blue' | 'green' | 'white' }[] = [
  { n: '1', x: 1454, y: 1676, kind: 'white' },
  { n: '1', x: 1498, y: 2151, kind: 'white' },
  { n: '123', x: 1585, y: 2184, kind: 'blue' },
  { n: '123', x: 1766, y: 2128, kind: 'blue' },
  { n: '116', x: 1676, y: 2323, kind: 'blue' },
  { n: '123', x: 2029, y: 2074.5, kind: 'blue' },
  { n: '49', x: 2554, y: 1850.5, kind: 'blue' },
  { n: '49', x: 2697, y: 2171.5, kind: 'blue' },
  { n: '95', x: 2228, y: 1697, kind: 'green' },
  { n: '95', x: 2097, y: 1987, kind: 'green' },
  { n: '95', x: 2027.5, y: 2306, kind: 'green' },
];

function Shield({ n, x, y, kind }: { n: string; x: number; y: number; kind: string }) {
  const half = n.length === 3 ? 20 : 15;
  if (kind === 'blue') {
    return (
      <g transform={`translate(${x} ${y})`}>
        <path
          d={`M${-half} -13Q0 -15 ${half} -13Q${half + 2} 6 0 14Q${-half - 2} 6 ${-half} -13Z`}
          fill="#3877c8"
        />
        <text y={5.5} textAnchor="middle" fontWeight={700} fontSize={19} fill="#fff">
          {n}
        </text>
      </g>
    );
  }
  if (kind === 'green') {
    return (
      <g transform={`translate(${x} ${y})`}>
        <path d="M-13 -13H13Q15 -13 15 -11V9L0 13.5L-15 9V-11Q-15 -13 -13 -13Z" fill="#6b9f43" />
        <text y={7} textAnchor="middle" fontWeight={700} fontSize={19} fill="#fcd21c">
          {n}
        </text>
      </g>
    );
  }
  return (
    <g transform={`translate(${x} ${y})`}>
      <path
        d="M-11 -14.5H11Q14 -14.5 14 -11.5V10L0 15L-14 10V-11.5Q-14 -14.5 -11 -14.5Z"
        fill="#fff"
        stroke="#6f7377"
        strokeWidth={2}
      />
      <text y={6} textAnchor="middle" fontWeight={500} fontSize={18} fill="#3c4043">
        {n}
      </text>
    </g>
  );
}

function Pin({ x, y }: { x: number; y: number }) {
  return (
    <g transform={`translate(${x} ${y})`}>
      <path
        d="M0 0C-21 0 -39 15 -39 36C-39 50 -32 61 -21 75L-9 92Q0 106 9 92L21 75C32 61 39 50 39 36C39 15 21 0 0 0Z"
        fill="#f76549"
        stroke="#f8261c"
        strokeWidth={1.6}
      />
      <rect x={-19.6} y={18.5} width={24.4} height={28} rx={1.5} />
      <path d="M-8.6 24H-5.6L-6 33.5H-8.2ZM-8.6 35.5H-5.6V38.2H-8.6Z" fill="#f3e8dd" />
      <path
        d="M6 26H13L20 34V45.5H6ZM9.5 29V34.5H16.5L12 29Z"
        fillRule="evenodd"
      />
      <circle cx={-11} cy={46} r={4} stroke="#f76549" strokeWidth={1} />
      <circle cx={12.5} cy={46} r={4} stroke="#f76549" strokeWidth={1} />
    </g>
  );
}

function Layers({ items }: { items: Layer[] }) {
  return (
    <>
      {items.map(([fill, d], i) => (
        <path key={i} d={d} fill={fill} />
      ))}
    </>
  );
}

function Highway({ d }: { d: string }) {
  return (
    <g fill="none" strokeLinejoin="round">
      <path d={d} stroke="#f9bd3f" strokeWidth={5} vectorEffect="non-scaling-stroke" />
      <path d={d} stroke="#fdefc0" strokeWidth={2.4} vectorEffect="non-scaling-stroke" />
    </g>
  );
}

function MinorRoad({ d }: { d: string }) {
  return <path d={d} fill="none" stroke="#fac35a" strokeWidth={1.8} vectorEffect="non-scaling-stroke" />;
}

const WEST_FRAME = 'translate(1100 1510) scale(.57398 .51403)';
const CENTRE_FRAME = 'translate(1900 1510) scale(.44643 .51403)';
const EAST_FRAME = 'translate(2550 1510) scale(.44643 .51403)';

function MapCanvas() {
  return (
    <svg className="block h-[799px] w-[2560px]" viewBox="599 1517 2560 799" fontFamily="Roboto, sans-serif">
      <defs>
        <clipPath id="west">
          <rect x={599} y={1517} width={1301} height={799} />
        </clipPath>
        <clipPath id="centre">
          <rect x={1900} y={1517} width={650} height={799} />
        </clipPath>
      </defs>
      <rect x={599} y={1517} width={2560} height={799} fill={LAND} />
      <g clipPath="url(#west)">
        <g transform={WEST_FRAME}>
          <Layers items={WEST} />
        </g>
      </g>
      <g clipPath="url(#centre)">
        <g transform={CENTRE_FRAME}>
          <Layers items={CENTRE} />
        </g>
      </g>
      <g transform={EAST_FRAME}>
        <Layers items={EAST} />
      </g>
      <g transform={CENTRE_FRAME}>
        <path d={TRACKS} fill="none" stroke="#fdfaf5" strokeWidth={3} vectorEffect="non-scaling-stroke" />
        <MinorRoad d={MINOR_ROADS.centre} />
        <Highway d={HIGHWAYS.centre} />
      </g>
      <g transform={WEST_FRAME}>
        <MinorRoad d={MINOR_ROADS.west} />
        <Highway d={HIGHWAYS.west} />
      </g>
      <g transform={EAST_FRAME}>
        <MinorRoad d={MINOR_ROADS.east} />
      </g>
      {SHIELDS.map((s, i) => (
        <Shield key={i} {...s} />
      ))}
      {PLACES.map((p, i) => (
        <g key={i}>
          {p.dot && <circle cx={p.dot[0]} cy={p.dot[1]} r={3.4} fill="#fff" stroke="#5f6368" strokeWidth={1.6} />}
          <text
            x={p.x + 0.5}
            y={p.y}
            textLength={p.w}
            fontSize={24}
            fill="#202124"
            stroke="#fff"
            strokeOpacity={0.75}
            strokeWidth={5}
            strokeLinejoin="round"
            paintOrder="stroke"
          >
            {p.t}
          </text>
        </g>
      ))}
      <g
        fontSize={28}
        fill="#188038"
        stroke="#fff"
        strokeOpacity={0.75}
        strokeWidth={5}
        strokeLinejoin="round"
        paintOrder="stroke"
      >
        <text x={1507} y={1833} textLength={118}>Toolonga</text>
        <text x={1470} y={1861} textLength={192}>Nature Reserve</text>
        <text x={2705} y={1588} textLength={168}>Ex Earaheedy</text>
      </g>
      <g
        fontSize={32}
        fontWeight={500}
        fill="#50555b"
        stroke="#fff"
        strokeOpacity={0.85}
        strokeWidth={5}
        strokeLinejoin="round"
        paintOrder="stroke"
      >
        <text x={2789} y={1731} textLength={165}>WESTERN</text>
        <text x={2773} y={1763} textLength={196}>AUSTRALIA</text>
      </g>
      <Pin x={2249} y={1529.5} />
      <Pin x={2349} y={1938} />
      <g fill="#1f1fff">
        <circle cx={1502} cy={2160} r={41} opacity={0.27} />
        <circle cx={1502} cy={2160} r={33.5} opacity={0.35} />
        <circle cx={1502} cy={2160} r={26.5} opacity={0.78} />
      </g>
      <text x={1502.5} y={2168.5} fontSize={23} textAnchor="middle" fill="#fff">
        4
      </text>
    </svg>
  );
}

function Pegman() {
  return (
    <svg className="block h-[64px] w-[38px]" viewBox="-19 -2 38 64">
      <path
        d="M-8 20H8Q11 20 12.500 23L17 40Q14 44 11 42L8.500 36V59.500H1V44H-1V59.500H-8.500V36L-11 42Q-14 44 -17 40L-12.500 23Q-11 20 -8 20Z"
        fill="#fdbf2d"
        stroke="#80796b"
        strokeWidth={1.3}
      />
      <path d="M-7 20.500H7L0 31Z" fill="#e58031" />
      <circle cx={0} cy={10.500} r={10.300} fill="#fdbf2d" stroke="#80796b" strokeWidth={1.3} />
    </svg>
  );
}

function MapPanel() {
  return (
    <section className="relative mt-[30px] h-[799px] overflow-hidden bg-[#e5e3df] pl-[599px] font-[Roboto,sans-serif]">
      <MapCanvas />
      <div className="absolute left-[20px] top-[20px] flex h-[80px] w-[384px] items-center rounded-[4px] bg-white text-[36px] shadow-[0_2px_8px_rgba(0,0,0,0.3)]">
        <div className="flex h-full w-[163px] items-center justify-center border-r-2 border-[#ececec] pl-[2px] font-medium text-black">
          Map
        </div>
        <div className="flex flex-1 items-center justify-center text-[#565656]">Satellite</div>
      </div>
      <div className="absolute right-[18px] top-[20px] flex h-[80px] w-[80px] items-center justify-center rounded-[4px] bg-white shadow-[0_2px_8px_rgba(0,0,0,0.3)]">
        <svg className="h-[36px] w-[36px]" viewBox="0 0 18 18" fill="#666">
          <path d="M0 0v6h2V2h4V0H0zm16 0h-4v2h4v4h2V0h-2zm0 16h-4v2h6v-6h-2v4zM2 12H0v6h6v-2H2v-4z" />
        </svg>
      </div>
      <div className="absolute right-[18px] top-[446px] flex h-[80px] w-[80px] items-center justify-center rounded-[4px] bg-white shadow-[0_2px_8px_rgba(0,0,0,0.3)]">
        <Pegman />
      </div>
      <div className="absolute right-[18px] top-[590px] flex h-[162px] w-[80px] flex-col items-center rounded-[4px] bg-white shadow-[0_2px_8px_rgba(0,0,0,0.3)]">
        <svg className="mt-[22px] h-[36px] w-[36px]" viewBox="0 0 18 18" fill="#666">
          <path d="M18 7h-7V0H7v7H0v4h7v7h4v-7h7V7z" />
        </svg>
        <div className="mt-[22px] h-[2px] w-[60px] bg-[#e6e6e6]" />
        <div className="mt-[36px] h-[8px] w-[36px] bg-[#666]" />
      </div>
      <svg className="absolute bottom-0 left-[12px] h-[56px] w-[130px]" viewBox="12 2260 130 56">
        <text
          x={20}
          y={2302}
          textLength={113}
          lengthAdjust="spacingAndGlyphs"
          fontFamily="Lato, sans-serif"
          fontSize={39}
          fill="#fff"
          stroke="#7b7b79"
          strokeWidth={4}
          strokeLinejoin="round"
          paintOrder="stroke"
        >
          Google
        </text>
      </svg>
      <div className="absolute bottom-0 right-0 flex h-[28px] gap-[2px] whitespace-nowrap text-[20px] leading-[30px] text-black">
        <div className="w-[195px] bg-[#f0efed] text-center">Keyboard shortcuts</div>
        <div className="w-[240px] bg-[#f0efed] text-center">Map data ©2024 Google</div>
        <div className="w-[76px] bg-[#f0efed] pl-[10px]">Terms</div>
      </div>
    </section>
  );
}

export default function App() {
  return (
    <div className="h-[2316px] w-[3840px] overflow-hidden bg-white font-['Liberation_Sans',Arial,sans-serif] text-black">
      <Header />
      <main className="pt-[62px]">
        <div className="ml-[64px] mr-[62px]">
          <h1 className="text-[56px] font-bold leading-[64px]">Welcome, Tyre Hero Admin</h1>
          <p className="mt-[14px] text-[32px] leading-[48px] tracking-[0.15px] text-[#8c8c8c]">
            May 20, 2024, 10:58:52 AM GMT+8
          </p>
          <h2 className="mt-[59px] text-[36px] font-bold leading-[48px] tracking-[0.1px]">Notifications</h2>
          <div className="mt-[23px] flex gap-[32px]">
            <LatestNotification />
            <NotificationSummary />
          </div>
          <hr className="mt-[64px] border-t-2 border-[#e0e0e0]" />
          <h2 className="mt-[59px] text-[36px] font-bold leading-[48px] tracking-[0.1px]">Issues</h2>
          <div className="mt-[23px] flex gap-[32px] text-[31px] font-bold tracking-[-0.05px]">
            <div className="flex h-[96px] w-[1841px] items-center gap-[24px] bg-[#53ae5a] pl-[32px] text-white">
              <MdTaskAlt size={44} className="text-[#16301a]" />
              <span className="pt-[2px]">0 critical issues to manage</span>
            </div>
            <div className="flex h-[96px] w-[1841px] items-center gap-[24px] bg-[#ffc908] pl-[32px] text-[#0d0a00]">
              <MdWarningAmber size={44} className="text-[#2b2200]" />
              <span className="pt-[2px]">439 warnings to manage</span>
            </div>
          </div>
          <hr className="mt-[64px] border-t-2 border-[#e0e0e0]" />
          <div className="mt-[44px] flex h-[48px] items-center gap-[33px]">
            <h2 className="pt-[2px] text-[36px] font-bold leading-[48px] tracking-[0.15px]">All Unit Groups</h2>
            <MdRefresh size={42} className="text-[#757575]" />
          </div>
        </div>
        <MapPanel />
      </main>
    </div>
  );
}
